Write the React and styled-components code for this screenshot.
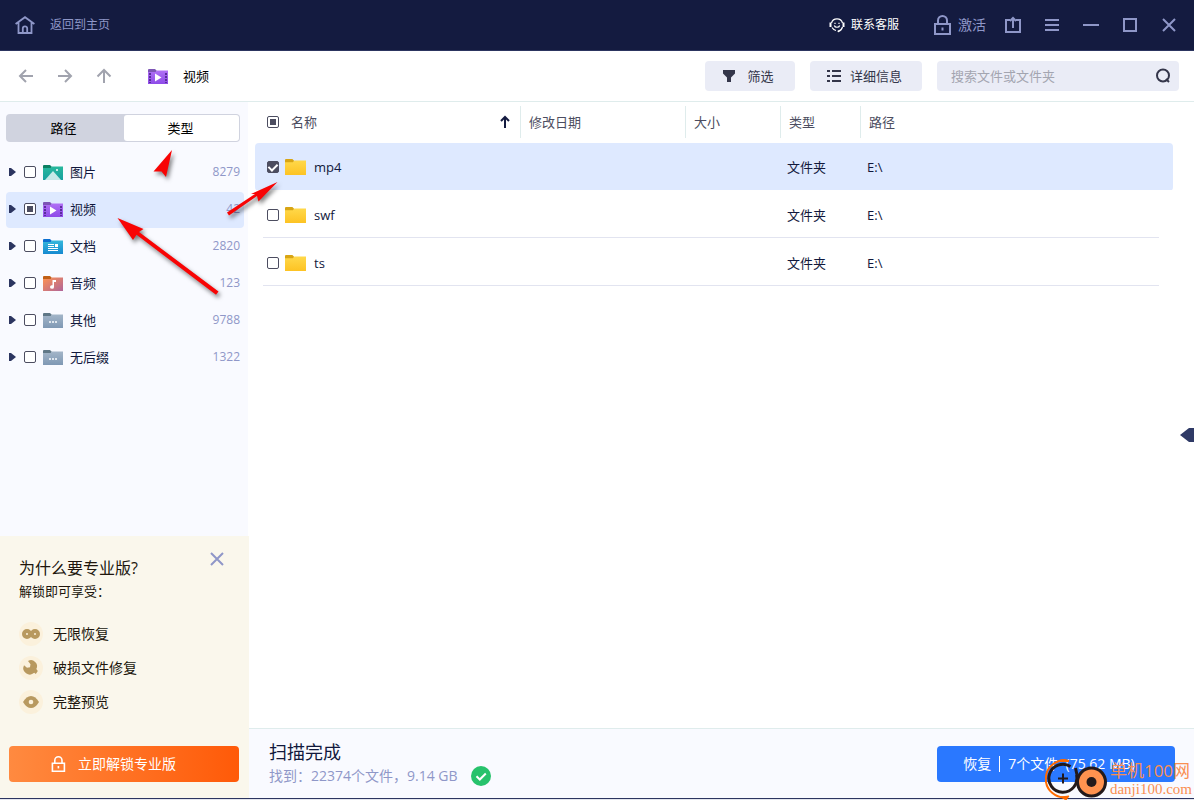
import React, { useEffect, useRef } from 'react';
import styled, { createGlobalStyle } from 'styled-components';

const categories = [
  { name: '图片', count: 8279, kind: 'image' },
  { name: '视频', count: 42, kind: 'video', active: true },
  { name: '文档', count: 2820, kind: 'doc' },
  { name: '音频', count: 123, kind: 'audio' },
  { name: '其他', count: 9788, kind: 'other' },
  { name: '无后缀', count: 1322, kind: 'other' }
];

const files = [
  { name: 'mp4', type: '文件夹', path: 'E:\\', checked: true },
  { name: 'swf', type: '文件夹', path: 'E:\\' },
  { name: 'ts', type: '文件夹', path: 'E:\\' }
];

const folderColors = {
  image: ['#0b7f62', '#27b89c', '#17a0a0'],
  video: ['#7d55b5', '#b070f5', '#8e4be8'],
  doc: ['#0b6fd0', '#35b8dc', '#1689d0'],
  audio: ['#c05f16', '#ff9350', '#b0659a'],
  other: ['#5f7786', '#a3b5c8', '#7f98b4'],
  plain: ['#d8a514', '#ffd84a', '#fdc323']
};

const FolderIcon = ({ kind, width = 20 }) => {
  const [tab, from, to] = folderColors[kind];
  const id = `folder-${kind}`;
  return (
    <svg width={width} height={width === 20 ? 15 : 16} viewBox="0 0 20 15" preserveAspectRatio="none">
      <defs>
        <linearGradient id={id} x1="0" y1="0" x2={kind === 'audio' ? '1' : '0'} y2="1">
          <stop offset="0" stopColor={from} />
          <stop offset="1" stopColor={to} />
        </linearGradient>
      </defs>
      <path d="M0 1q0-1 1-1h6l1.500 1.500V5H0z" fill={tab} />
      <path d="M0 3h7.500l1.500-1.500H20V15H0z" fill={`url(#${id})`} />
      {kind === 'image' && (
        <g fill="#fff">
          <path d="M2 15l8-9 8 9z" opacity=".75" />
          <circle cx="14" cy="5" r="1" />
        </g>
      )}
      {kind === 'video' && (
        <g>
          <path d="M7 4.500v8L13.500 8.500z" fill="#fff" />
          <path
            d="M1 4h2v2H1zM1 7h2v2H1zM1 10h2v2H1zM1 13h2v1H1zM17 4h2v2h-2zM17 7h2v2h-2zM17 10h2v2h-2zM17 13h2v1h-2z"
            fill="#5b2d9c"
          />
        </g>
      )}
      {kind === 'doc' && (
        <path d="M5 5h6v1H5zM5 7h6v1H5zM12 5h3v3h-3zM5 9h10v1H5zM5 11h10v1H5z" fill="#fff" />
      )}
      {kind === 'audio' && (
        <path d="M9.500 4h3.500v2h-2v5a2 1.800 0 1 1-1.500-1.700z" fill="#fff" />
      )}
      {kind === 'other' && <path d="M6 8h2v2H6zM9 8h2v2H9zM12 8h2v2h-2z" fill="#dfe6ee" />}
    </svg>
  );
};

const LockIcon = ({ size = 20 }) => (
  <svg width={size} height={size} viewBox="0 0 20 20" fill="none" stroke="currentColor" strokeWidth="2">
    <path d="M3 9h15v10H3zM6 9V5.500a4.500 4.500 0 0 1 9 0V9" />
    <path d="M10.500 12.500v3" />
  </svg>
);

const Line = ({ d, size = 16, width = 2 }) => (
  <svg width={size} height={size} viewBox={`0 0 ${size} ${size}`} fill="none" stroke="currentColor" strokeWidth={width}>
    <path d={d} />
  </svg>
);

const Check = ({ partial, ...rest }) => {
  const ref = useRef(null);
  useEffect(() => {
    ref.current.indeterminate = !!partial;
  }, [partial]);
  return <Box type="checkbox" ref={ref} {...rest} />;
};

const Header = () => (
  <TitleBar>
    <HomeLink href="#home">
      <svg width="20" height="18" viewBox="0 0 20 18" fill="none" stroke="currentColor" strokeWidth="1.800">
        <path d="M.6 8L10 1.200 19.400 8M3.500 6.500V17h13V6.500M7.800 17v-4.500a2.200 2.200 0 0 1 4.400 0V17" />
      </svg>
      返回到主页
    </HomeLink>
    <Support href="#support">
      <svg width="16" height="16" viewBox="0 0 16 16" fill="none" stroke="currentColor">
        <path d="M2.500 6a5.700 5.500 0 0 1 11 0M3 10.500q1.500 2.500 4 3M13.500 10q-.8 3.200-4 4.200" strokeWidth="1.200" />
        <path d="M1.500 5.500v4.500M14.500 5.500v4.500" strokeWidth="2" />
        <path d="M5.300 8.500a2.800 2.400 0 0 0 5.400 0M6 5.800v1.200M10 5.800v1.200" strokeWidth="1.200" />
        <circle cx="9.500" cy="14.200" r="1" fill="currentColor" stroke="none" />
      </svg>
      联系客服
    </Support>
    <Activate>
      <LockIcon />
      激活
    </Activate>
    <WindowButton aria-label="导出">
      <Line size={18} d="M6 4H2v12h14V4h-4M9 12V2M6 5l3-3 3 3" />
    </WindowButton>
    <WindowButton aria-label="菜单">
      <Line d="M1 3h14M1 8h14M1 13h14" />
    </WindowButton>
    <WindowButton aria-label="最小化">
      <Line d="M0 8h16" />
    </WindowButton>
    <WindowButton aria-label="最大化">
      <Line d="M2 2h12v12H2z" />
    </WindowButton>
    <WindowButton aria-label="关闭">
      <Line d="M2 2l12 12M14 2L2 14" />
    </WindowButton>
  </TitleBar>
);

const Tools = () => (
  <Toolbar>
    <NavButton aria-label="后退">
      <Line d="M15 8H2M8 2L2 8l6 6" />
    </NavButton>
    <NavButton aria-label="前进">
      <Line d="M1 8h13M8 2l6 6-6 6" />
    </NavButton>
    <NavButton aria-label="向上">
      <Line d="M8 15V2M1.500 8.500L8 2l6.500 6.500" />
    </NavButton>
    <Crumb>
      <FolderIcon kind="video" />
      视频
    </Crumb>
    <ToolButton>
      <svg width="14" height="14" viewBox="0 0 14 14" fill="currentColor">
        <path d="M1 1h12v3.500L9 8.500V13H5V8.500L1 4.500z" />
      </svg>
      筛选
    </ToolButton>
    <ToolButton wide>
      <Line d="M1 3h3M6 3h9M1 8h3M6 8h9M1 13h3M6 13h9" />
      详细信息
    </ToolButton>
    <Search>
      <SearchInput type="text" aria-label="搜索" placeholder="搜索文件或文件夹" />
      <SearchButton aria-label="搜索">
        <svg width="16" height="16" viewBox="0 0 16 16" fill="none" stroke="currentColor" strokeWidth="2">
          <circle cx="8" cy="7.500" r="6" />
          <path d="M11 11l3 3" />
        </svg>
      </SearchButton>
    </Search>
  </Toolbar>
);

const Tree = () => (
  <TreeList>
    {categories.map(({ name, count, kind, active }) => (
      <TreeItem key={name} active={active}>
        <Expander aria-label={`展开${name}`}>
          <svg width="8" height="10" viewBox="0 0 8 10" fill="currentColor">
            <path d="M0 1h2L7 5 2 9H0z" />
          </svg>
        </Expander>
        <TreeLabel>
          <Check partial={active} />
          <FolderIcon kind={kind} />
          {name}
        </TreeLabel>
        <Count>{count}</Count>
      </TreeItem>
    ))}
  </TreeList>
);

const Promo = () => (
  <PromoPanel>
    <PromoClose aria-label="关闭">
      <Line size={14} d="M1 1l12 12M13 1L1 13" />
    </PromoClose>
    <PromoTitle>为什么要专业版?</PromoTitle>
    <PromoText>解锁即可享受：</PromoText>
    <Perks>
      <Perk>
        <svg width="24" height="24" viewBox="0 0 24 24">
          <circle cx="12" cy="12" r="12" fill="#fbf1dc" />
          <g fill="none" stroke="#b8995f" strokeWidth="4">
            <circle cx="8" cy="12" r="3" />
            <circle cx="16" cy="12" r="3" />
          </g>
        </svg>
        无限恢复
      </Perk>
      <Perk>
        <svg width="24" height="24" viewBox="0 0 24 24">
          <circle cx="12" cy="12" r="12" fill="#fbf1dc" />
          <path
            d="M9 5a6 6 0 0 1 8.300 8l1.500 2-.8 1.200-1.200 1.800-1.600-1.200a6.500 6.500 0 0 1-10.200-7.600l3 2.600 3-.5.500-3z"
            fill="#b8995f"
          />
        </svg>
        破损文件修复
      </Perk>
      <Perk>
        <svg width="24" height="24" viewBox="0 0 24 24">
          <circle cx="12" cy="12" r="12" fill="#fbf1dc" />
          <path d="M4 12q3.500-6 8-6t8 6q-3.500 6-8 6t-8-6z" fill="#b8995f" />
          <circle cx="12" cy="12" r="2.300" fill="#fbf1dc" />
        </svg>
        完整预览
      </Perk>
    </Perks>
    <UnlockButton>
      <LockIcon size={16} />
      立即解锁专业版
    </UnlockButton>
  </PromoPanel>
);

const FileTable = () => (
  <Table>
    <colgroup>
      <Col size={265} />
      <Col size={165} />
      <Col size={95} />
      <Col size={80} />
      <col />
    </colgroup>
    <thead>
      <tr>
        <Th>
          <NameHead>
            <Check partial aria-label="全选" />
            名称
            <SortArrow width="10" height="14" viewBox="0 0 10 14" fill="none" stroke="#141b40" strokeWidth="2">
              <path d="M5 13V2M1 6l4-4 4 4" />
            </SortArrow>
          </NameHead>
        </Th>
        {['修改日期', '大小', '类型', '路径'].map(title => (
          <Th key={title}>
            <HeadCell>{title}</HeadCell>
          </Th>
        ))}
      </tr>
    </thead>
    <tbody>
      {files.map(({ name, type, path, checked }) => (
        <Row key={name} checked={checked}>
          <Td>
            <FileLabel>
              <Check defaultChecked={checked} />
              <FolderIcon kind="plain" width={21} />
              <FileName>{name}</FileName>
            </FileLabel>
          </Td>
          <Td />
          <Td />
          <Td>{type}</Td>
          <Td>{path}</Td>
        </Row>
      ))}
    </tbody>
  </Table>
);

const Status = () => (
  <Footer>
    <div>
      <StatusTitle>扫描完成</StatusTitle>
      <StatusText>
        找到：22374个文件，9.14 GB
        <svg width="20" height="20" viewBox="0 0 20 20">
          <circle cx="10" cy="10" r="10" fill="#27c26c" />
          <path d="M5.500 10.200l3.300 3.300 6-6" fill="none" stroke="#fff" strokeWidth="2" />
        </svg>
      </StatusText>
    </div>
    <RecoverButton>
      恢复
      <Divider />
      7个文件&nbsp; (75.62 MB)
    </RecoverButton>
  </Footer>
);

const Arrows = () => (
  <ArrowLayer width="300" height="320" viewBox="0 0 300 320" fill="#f80404">
    <path d="M172 150L166 177l-4.500-5.500-8 0z" />
    <path d="M277.500 182L258.500 201.500l-1.500-5.500-28 19.500-2-3 28-18.500-4 0z" />
    <path d="M117.500 218L143.500 229l-4.500 3L218.500 291.500l-2.500 3.300-79.500-60L133 240z" />
  </ArrowLayer>
);

const Watermark = () => (
  <Stamp>
    <svg width="64" height="42" viewBox="0 0 64 42" fill="none">
      <path d="M24 3A18.500 18.500 0 1 0 23 39" stroke="#ff6a00" strokeWidth="2" />
      <path d="M13 3.500q5-4 11 0zM16 39l8-1-3 4z" fill="#ff6a00" stroke="#ff6a00" />
      <path d="M25.500 8.500A14 14 0 1 0 31.500 17M30.500 10l1.500 7" stroke="#23191a" strokeWidth="3" />
      <path d="M13 20.500h10M18 15.500v10" stroke="#23191a" strokeWidth="2" />
      <circle cx="46.500" cy="24" r="14" fill="#ff924f" stroke="#23191a" strokeWidth="3" />
      <circle cx="46.500" cy="24" r="5" fill="#23191a" />
    </svg>
    <div>
      <StampName>单机100网</StampName>
      <StampSite>danji100.com</StampSite>
    </div>
  </Stamp>
);

const App = () => (
  <Page>
    <GlobalStyle />
    <Window>
      <Header />
      <Tools />
      <Body>
        <Sidebar>
          <Switch>
            <SwitchButton>路径</SwitchButton>
            <SwitchButton active>类型</SwitchButton>
          </Switch>
          <Tree />
          <Promo />
        </Sidebar>
        <Main>
          <Content>
            <FileTable />
            <Handle aria-label="展开预览">
              <svg width="14" height="16" viewBox="0 0 14 16" fill="#2f3a66">
                <path d="M0 8L9 1h5v14H9z" />
              </svg>
            </Handle>
          </Content>
          <Status />
        </Main>
      </Body>
    </Window>
    <Arrows />
    <Watermark />
  </Page>
);

const GlobalStyle = createGlobalStyle`
  * {
    box-sizing: border-box;
  }
  body {
    margin: 0;
    font-family: 'Open Sans', 'Noto Sans CJK SC', sans-serif;
    font-size: 13px;
    line-height: 20px;
    color: #11183c;
    background: #e4e6ee;
  }
  button, input {
    font: inherit;
    color: inherit;
    border: 0;
    padding: 0;
    background: none;
  }
  a {
    text-decoration: none;
  }
  svg {
    flex: none;
    display: block;
  }
`;
const Page = styled.div`
  position: relative;
  min-height: 100vh;
  padding-bottom: 1px;
  display: flex;
  flex-direction: column;
`;
const Window = styled.div`
  flex: 1;
  display: flex;
  flex-direction: column;
  background: #fff;
  border-bottom: 1px solid #2c3560;
`;
const TitleBar = styled.header`
  display: flex;
  align-items: center;
  height: 51px;
  padding: 0 6px 0 15px;
  background: #141b40;
  border-bottom: 1px solid #2c3560;
  color: #8f97c8;
`;
const HomeLink = styled.a`
  display: flex;
  align-items: center;
  gap: 15px;
  margin-right: auto;
  font-size: 12px;
  color: #8f97c8;
`;
const Support = styled.a`
  display: flex;
  align-items: center;
  gap: 6px;
  font-size: 12px;
  color: #fff;
`;
const Activate = styled.button`
  display: flex;
  align-items: center;
  gap: 6px;
  margin: 0 7px 0 33px;
  font-size: 14px;
`;
const WindowButton = styled.button`
  display: flex;
  align-items: center;
  justify-content: center;
  width: 39px;
  height: 50px;
`;
const Toolbar = styled.nav`
  display: flex;
  align-items: center;
  height: 51px;
  padding: 0 15px 0 6px;
  border-bottom: 1px solid #dfecec;
`;
const NavButton = styled(WindowButton)`
  color: #a1a3ae;
`;
const Crumb = styled.div`
  display: flex;
  align-items: center;
  gap: 15px;
  margin: 0 auto 0 25px;
  color: #000;
`;
const ToolButton = styled.button`
  display: flex;
  align-items: center;
  justify-content: center;
  gap: ${props => (props.wide ? '8px' : '11px')};
  width: ${props => (props.wide ? '112px' : '90px')};
  height: 30px;
  margin-right: 15px;
  padding-right: 4px;
  border-radius: 4px;
  background: #eaecf6;
  color: #34364a;
`;
const Search = styled.div`
  display: flex;
  align-items: center;
  width: 242px;
  height: 30px;
  padding: 0 8px 0 14px;
  border-radius: 4px;
  background: #eaecf6;
`;
const SearchInput = styled.input`
  flex: 1;
  min-width: 0;
  outline: 0;
  &::placeholder {
    color: #a3a5b0;
  }
`;
const SearchButton = styled.button`
  color: #34364a;
`;
const Body = styled.div`
  flex: 1;
  display: flex;
`;
const Sidebar = styled.aside`
  display: flex;
  flex-direction: column;
  flex: none;
  width: 248px;
  background: #f9faff;
`;
const Switch = styled.div`
  display: flex;
  gap: 2px;
  height: 28px;
  margin: 12px 8px 13px 6px;
  padding: 1px;
  border-radius: 4px;
  background: #d0d3df;
`;
const SwitchButton = styled.button`
  flex: 1;
  padding-right: 2px;
  border-radius: 3px;
  background: ${props => (props.active ? '#fff' : 'none')};
  color: #000;
`;
const TreeList = styled.ul`
  display: flex;
  flex-direction: column;
  gap: 1px;
  margin: 0 4px 0 6px;
  padding: 0;
  list-style: none;
`;
const TreeItem = styled.li`
  display: flex;
  align-items: center;
  height: 36px;
  padding: 0 4px 2px 3px;
  border-radius: 4px;
  background: ${props => (props.active ? '#dee9ff' : 'none')};
`;
const Expander = styled.button`
  width: 15px;
  color: #2c3560;
`;
const TreeLabel = styled.label`
  display: flex;
  align-items: center;
  gap: 7px;
`;
const Count = styled.span`
  margin-left: auto;
  font-size: 12px;
  color: #8f97c8;
`;
const Box = styled.input`
  appearance: none;
  flex: none;
  display: flex;
  align-items: center;
  justify-content: center;
  width: 12px;
  height: 12px;
  margin: 0;
  border: 1px solid #4c4d60;
  border-radius: 2px;
  background: #fff;
  &:indeterminate::after {
    content: '';
    width: 6px;
    height: 6px;
    background: #4c4d60;
  }
  &:checked {
    background: #4c4d60;
  }
  &:checked::after {
    content: '';
    width: 4px;
    height: 7px;
    margin-bottom: 2px;
    border: solid #fff;
    border-width: 0 2px 2px 0;
    transform: rotate(45deg);
  }
`;
const PromoPanel = styled.section`
  position: relative;
  margin: auto -1px 0 0;
  padding: 20px 10px 16px 9px;
  background: #faf7ec;
  color: #20160c;
`;
const PromoClose = styled.button`
  position: absolute;
  top: 16px;
  right: 25px;
  color: #8f97c8;
`;
const PromoTitle = styled.h2`
  margin: 0 10px;
  font-size: 16px;
  font-weight: 400;
  line-height: 24px;
`;
const PromoText = styled.p`
  margin: 0 10px 20px;
  line-height: 22px;
`;
const Perks = styled.ul`
  display: flex;
  flex-direction: column;
  gap: 10px;
  margin: 0 10px 32px;
  padding: 0;
  list-style: none;
`;
const Perk = styled.li`
  display: flex;
  align-items: center;
  gap: 10px;
  height: 24px;
  font-size: 14px;
`;
const UnlockButton = styled.button`
  display: flex;
  align-items: center;
  justify-content: center;
  gap: 12px;
  width: 100%;
  height: 36px;
  padding-right: 22px;
  border-radius: 4px;
  background: linear-gradient(90deg, #ff8a40, #ff5a08);
  font-size: 14px;
  color: #fff;
`;
const Main = styled.main`
  flex: 1;
  min-width: 0;
  display: flex;
  flex-direction: column;
`;
const Content = styled.div`
  position: relative;
  flex: 1;
  padding: 0 21px 0 7px;
`;
const Table = styled.table`
  width: 100%;
  table-layout: fixed;
  border-spacing: 0;
`;
const Col = styled.col`
  width: ${props => props.size}px;
`;
const Th = styled.th`
  height: 41px;
  padding: 0 0 2px;
  text-align: left;
  font-weight: 400;
  color: #4c4d60;
`;
const HeadCell = styled.div`
  padding: 6px 8px;
  border-left: 1px solid #dfecec;
`;
const NameHead = styled.div`
  display: flex;
  align-items: center;
  gap: 12px;
  padding: 0 10px 0 12px;
`;
const SortArrow = styled.svg`
  margin-left: auto;
`;
const Td = styled.td`
  height: 48px;
  padding: 0 7px;
`;
const Row = styled.tr`
  background: ${props =>
    props.checked
      ? 'none'
      : 'linear-gradient(#e2e4f0, #e2e4f0) 8px 46px / calc(100% - 22px) 1px no-repeat'};
  ${Td} {
    background: ${props => (props.checked ? 'linear-gradient(#dee9ff, #dee9ff) 0 0 / 100% 47px no-repeat' : 'none')};
  }
  ${Td}:first-child {
    border-radius: 4px 0 0 4px;
  }
  ${Td}:last-child {
    border-radius: 0 4px 4px 0;
  }
`;
const FileLabel = styled.label`
  display: flex;
  align-items: center;
  gap: 6px;
  padding-left: 5px;
`;
const FileName = styled.span`
  padding-left: 2px;
`;
const Handle = styled.button`
  position: absolute;
  right: 0;
  top: 325px;
`;
const Footer = styled.footer`
  display: flex;
  align-items: center;
  justify-content: space-between;
  height: 70px;
  padding: 0 19px 0 21px;
  border-top: 1px solid #dfecec;
  background: #f9faff;
`;
const StatusTitle = styled.div`
  font-size: 18px;
  line-height: 24px;
`;
const StatusText = styled.div`
  display: flex;
  align-items: center;
  gap: 13px;
  font-size: 14px;
  line-height: 24px;
  color: #8f97c8;
`;
const RecoverButton = styled.button`
  display: flex;
  align-items: center;
  justify-content: center;
  gap: 8px;
  width: 238px;
  height: 36px;
  padding-right: 14px;
  border-radius: 4px;
  background: #2a78ff;
  font-size: 14px;
  color: #fff;
`;
const Divider = styled.span`
  width: 1px;
  height: 16px;
  background: #fff;
`;
const ArrowLayer = styled.svg`
  position: absolute;
  left: 0;
  top: 0;
  pointer-events: none;
  filter: drop-shadow(2px 3px 2px rgba(0, 0, 0, 0.5));
`;
const Stamp = styled.div`
  position: absolute;
  right: 2px;
  bottom: 0;
  display: flex;
  align-items: center;
  gap: 1px;
  pointer-events: none;
  color: #f98f52;
`;
const StampName = styled.div`
  font-size: 17px;
  line-height: 20px;
`;
const StampSite = styled.div`
  font-family: 'Liberation Serif', serif;
  font-size: 15px;
  line-height: 16px;
`;

export default App;
